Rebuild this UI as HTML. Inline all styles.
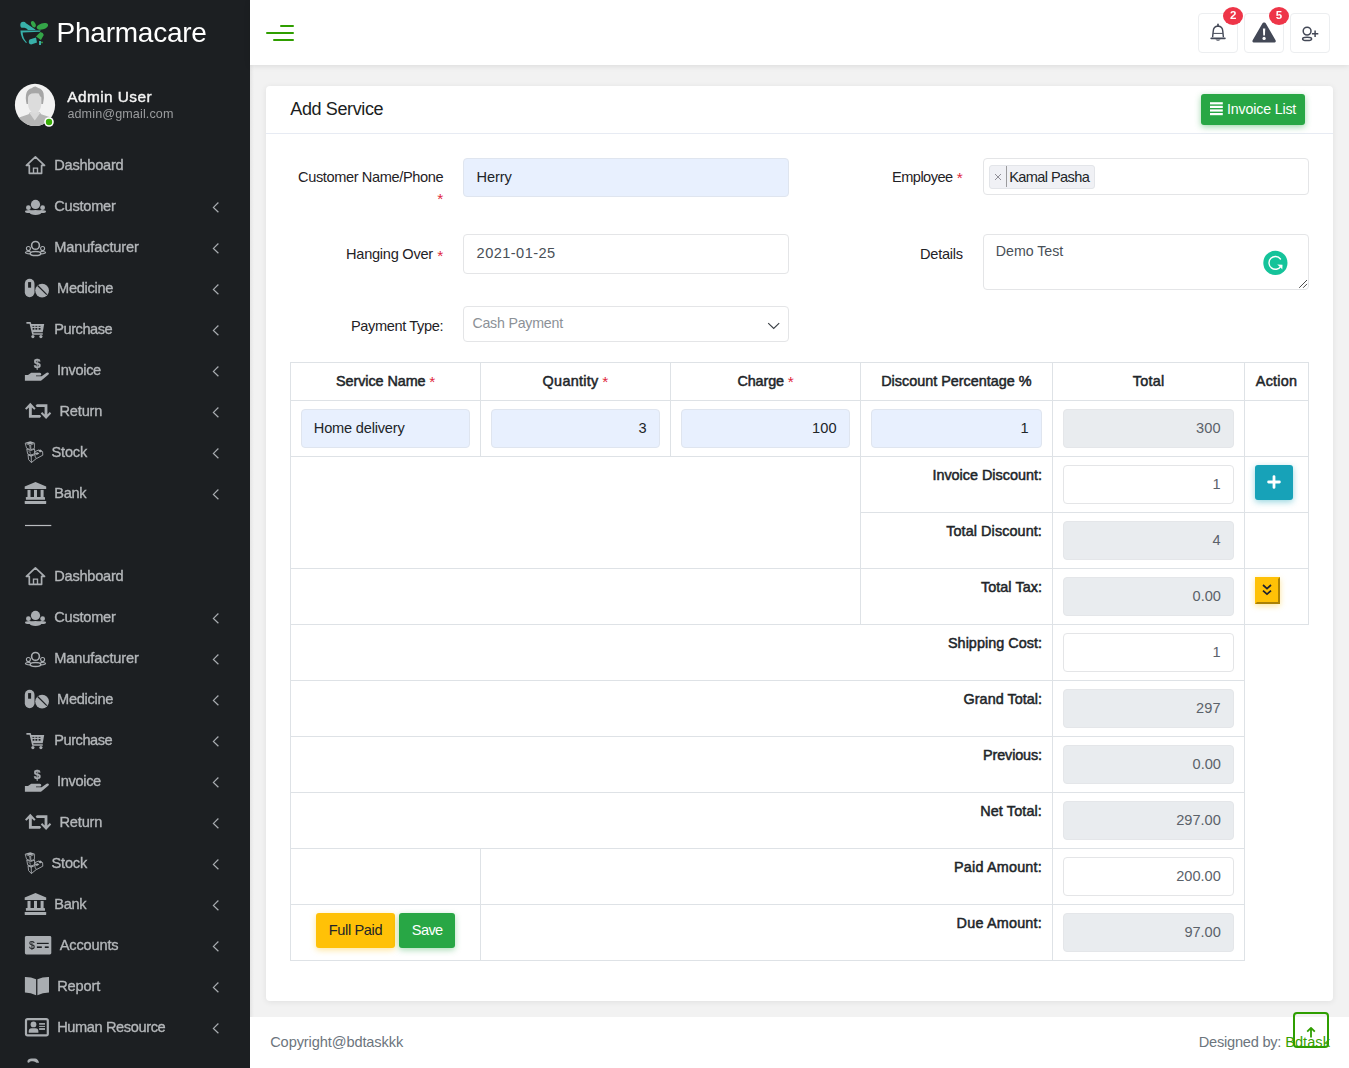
<!DOCTYPE html>
<html><head><meta charset="utf-8"><title>Add Service</title>
<style>
*{box-sizing:border-box;margin:0;padding:0}
html,body{width:1349px;height:1068px;overflow:hidden;background:#f2f2f2;font-family:"Liberation Sans",sans-serif;color:#212529;font-size:14px}
.t{position:absolute;white-space:nowrap;display:block}
svg{position:absolute;overflow:visible}
#sidebar{position:absolute;left:0;top:0;width:250px;height:1068px;background:#1c1f22;overflow:hidden}
#sbshadow{position:absolute;left:250px;top:65px;width:4px;height:1003px;background:linear-gradient(90deg,rgba(0,0,0,.06),rgba(0,0,0,0))}
#topbar{position:absolute;left:250px;top:0;width:1099px;height:65px;background:#fff;box-shadow:0 1px 6px rgba(0,0,0,.10)}
#card{position:absolute;left:266px;top:86px;width:1067px;height:915px;background:#fff;border-radius:4px;box-shadow:0 1px 6px rgba(0,0,0,.08)}
#cardhead{position:absolute;left:266px;top:133px;width:1067px;height:1px;background:#e7ebf3}
#footer{position:absolute;left:250px;top:1017px;width:1099px;height:51px;background:#fff}
.box{position:absolute;border:1px solid #e4e5e7;border-radius:4px;background:#fff}
.ln{position:absolute;background:#dee2e6}
.btn{position:absolute;border-radius:3px}
#sbtxt{position:absolute;left:0;top:0;width:250px;height:1068px;will-change:transform}

</style></head>
<body>
<div id="sidebar"><svg width="250" height="1068" viewBox="0 0 250 1068" style="left:0;top:0"><path d="M35.4 156.8 L26.4 165.4 L29.3 165.4 L29.3 173.3 L41.6 173.3 L41.6 165.4 L44.5 165.4 Z" fill="none" stroke="#a9adb1" stroke-width="1.7" stroke-linejoin="round"/><path d="M33.5 173.3 V168.1 H37.5 V173.3" fill="none" stroke="#a9adb1" stroke-width="1.4"/><circle cx="35.5" cy="204.4" r="4.6" fill="#a9adb1"/><circle cx="28.4" cy="207.7" r="2.4" fill="#a9adb1"/><circle cx="42.6" cy="207.7" r="2.4" fill="#a9adb1"/><ellipse cx="29.4" cy="211.6" rx="4.4" ry="1.5" fill="#a9adb1"/><ellipse cx="41.6" cy="211.6" rx="4.4" ry="1.5" fill="#a9adb1"/><ellipse cx="35.5" cy="212.6" rx="5.9" ry="2.5" fill="#a9adb1"/><path d="M218.4 202.5 L213.4 207.4 L218.4 212.3" fill="none" stroke="#a9adb1" stroke-width="1.2"/><circle cx="35.5" cy="245.4" r="3.9" fill="none" stroke="#a9adb1" stroke-width="1.6"/><circle cx="28.4" cy="248.5" r="2" fill="none" stroke="#a9adb1" stroke-width="1.1"/><circle cx="42.6" cy="248.5" r="2" fill="none" stroke="#a9adb1" stroke-width="1.1"/><path d="M30.6 251.6 Q25.4 251.4 25.4 252.6 Q25.4 253.8 30 253.9 M40.4 251.6 Q45.6 251.4 45.6 252.6 Q45.6 253.8 41 253.9" fill="none" stroke="#a9adb1" stroke-width="1.1"/><ellipse cx="35.5" cy="253.6" rx="5.3" ry="2" fill="none" stroke="#a9adb1" stroke-width="1.5"/><path d="M218.4 243.5 L213.4 248.4 L218.4 253.3" fill="none" stroke="#a9adb1" stroke-width="1.2"/><rect x="24.8" y="278.8" width="9.7" height="18.4" rx="4.85" fill="#a9adb1"/><rect x="28.1" y="282.1" width="3" height="5.6" fill="#1c1f22"/><circle cx="42.1" cy="290.6" r="6.9" fill="#a9adb1"/><path d="M37.6 285.5 L46.8 294.7" stroke="#1c1f22" stroke-width="1.2"/><path d="M218.4 284.5 L213.4 289.4 L218.4 294.3" fill="none" stroke="#a9adb1" stroke-width="1.2"/><path d="M27 322.9 H30.2 L32.9 334 H42.2" fill="none" stroke="#a9adb1" stroke-width="1.6" stroke-linecap="round" stroke-linejoin="round"/><path d="M30.8 324.1 H44.2 L42.7 332.2 H32.6 Z" fill="#a9adb1"/><g fill="#1c1f22"><rect x="32.4" y="325.9" width="1.9" height="0.9"/><rect x="35.4" y="325.9" width="1.9" height="0.9"/><rect x="38.6" y="325.9" width="1.9" height="0.9"/><rect x="32.6" y="328.0" width="1.8" height="1.7"/><rect x="35.4" y="328.0" width="1.9" height="1.7"/><rect x="38.6" y="328.0" width="1.9" height="1.7"/></g><circle cx="32.9" cy="336.6" r="1.6" fill="#a9adb1"/><circle cx="40.9" cy="336.6" r="1.6" fill="#a9adb1"/><path d="M218.4 325.5 L213.4 330.4 L218.4 335.3" fill="none" stroke="#a9adb1" stroke-width="1.2"/><path d="M24.9 375 H28 L31.2 372.8 H39.8 Q41.3 372.9 41.3 374.2 Q41.3 375.4 39.8 375.5 H36 V376.3 H41.6 L46.6 372.7 Q48 372 48.8 373 Q49.2 374 48.2 374.8 L41 380.8 H24.9 Z" fill="#a9adb1"/><path d="M218.4 366.5 L213.4 371.4 L218.4 376.3" fill="none" stroke="#a9adb1" stroke-width="1.2"/><path d="M30.3 402.7 L35.6 408.4 L34.2 409.8 L31.8 407.4 V414.9 H40 L41.2 416.2 L40 417.7 H28.9 V407.4 L26.4 409.8 L25 408.4 Z" fill="#a9adb1"/><path d="M46.1 419.1 L40.8 413.4 L42.2 412 L44.6 414.4 V407.1 H36.9 L35.6 405.7 L36.9 404.3 H47.4 V414.4 L49.8 412 L51.2 413.4 Z" fill="#a9adb1"/><path d="M218.4 407.5 L213.4 412.4 L218.4 417.3" fill="none" stroke="#a9adb1" stroke-width="1.2"/><path d="M25 442.8 L30.3 441.2 L34.8 442.8 L30 444.4 Z" fill="#a9adb1"/><path d="M25.2 443.4 L29.6 445 L30.4 449.7 L26.6 448.2 Z M30.6 445 L34.6 443.4 L34.4 448.4 L31 449.7 Z" fill="none" stroke="#a9adb1" stroke-width="0.8"/><path d="M26.8 449 L30.6 450.6 L34.6 449 L34.6 453.6 L30.8 455.2 L27.6 453.8 Z" fill="none" stroke="#a9adb1" stroke-width="0.9"/><path d="M27.6 450.4 L30.8 451.8 L30.8 454.8 Z" fill="#a9adb1" opacity=".55"/><path d="M28 454.6 L31.2 456.2 L35 454.4 M28 454.6 L28.6 459.6 L31.4 462.6 L31.2 456.2 M31.4 462.6 L36.2 458.6" fill="none" stroke="#a9adb1" stroke-width="0.9"/><path d="M28 455 L31 456.6 L33.6 455.4 L31 454.2 Z" fill="#a9adb1" opacity=".8"/><path d="M35 451.6 L38.6 450 L42.6 451.6 L42.8 455.2 L36.4 458.6 L35 456.2 Z" fill="none" stroke="#a9adb1" stroke-width="0.9"/><path d="M34.8 453.2 L37.6 452.2 L39.4 453.6 L36.8 455 Z M38 450.6 L40.6 449.6 L42.4 451.2 L40 452.4 Z" fill="#a9adb1"/><path d="M218.4 448.5 L213.4 453.4 L218.4 458.3" fill="none" stroke="#a9adb1" stroke-width="1.2"/><path d="M35.5 482.1 L46.2 486.4 V489.1 H24.7 V486.4 Z" fill="#a9adb1"/><rect x="27.5" y="489.9" width="3" height="7.2" fill="#a9adb1"/><rect x="34" y="489.9" width="3" height="7.2" fill="#a9adb1"/><rect x="40.6" y="489.9" width="3" height="7.2" fill="#a9adb1"/><rect x="25.9" y="497" width="19.1" height="2.8" rx="0.4" fill="#a9adb1"/><rect x="24.7" y="501.1" width="21.5" height="2.8" rx="0.4" fill="#a9adb1"/><path d="M218.4 489.5 L213.4 494.4 L218.4 499.3" fill="none" stroke="#a9adb1" stroke-width="1.2"/><path d="M35.4 567.8 L26.4 576.4 L29.3 576.4 L29.3 584.3 L41.6 584.3 L41.6 576.4 L44.5 576.4 Z" fill="none" stroke="#a9adb1" stroke-width="1.7" stroke-linejoin="round"/><path d="M33.5 584.3 V579.1 H37.5 V584.3" fill="none" stroke="#a9adb1" stroke-width="1.4"/><circle cx="35.5" cy="615.4" r="4.6" fill="#a9adb1"/><circle cx="28.4" cy="618.7" r="2.4" fill="#a9adb1"/><circle cx="42.6" cy="618.7" r="2.4" fill="#a9adb1"/><ellipse cx="29.4" cy="622.6" rx="4.4" ry="1.5" fill="#a9adb1"/><ellipse cx="41.6" cy="622.6" rx="4.4" ry="1.5" fill="#a9adb1"/><ellipse cx="35.5" cy="623.6" rx="5.9" ry="2.5" fill="#a9adb1"/><path d="M218.4 613.5 L213.4 618.4 L218.4 623.3" fill="none" stroke="#a9adb1" stroke-width="1.2"/><circle cx="35.5" cy="656.4" r="3.9" fill="none" stroke="#a9adb1" stroke-width="1.6"/><circle cx="28.4" cy="659.5" r="2" fill="none" stroke="#a9adb1" stroke-width="1.1"/><circle cx="42.6" cy="659.5" r="2" fill="none" stroke="#a9adb1" stroke-width="1.1"/><path d="M30.6 662.6 Q25.4 662.4 25.4 663.6 Q25.4 664.8 30 664.9 M40.4 662.6 Q45.6 662.4 45.6 663.6 Q45.6 664.8 41 664.9" fill="none" stroke="#a9adb1" stroke-width="1.1"/><ellipse cx="35.5" cy="664.6" rx="5.3" ry="2" fill="none" stroke="#a9adb1" stroke-width="1.5"/><path d="M218.4 654.5 L213.4 659.4 L218.4 664.3" fill="none" stroke="#a9adb1" stroke-width="1.2"/><rect x="24.8" y="689.8" width="9.7" height="18.4" rx="4.85" fill="#a9adb1"/><rect x="28.1" y="693.1" width="3" height="5.6" fill="#1c1f22"/><circle cx="42.1" cy="701.6" r="6.9" fill="#a9adb1"/><path d="M37.6 696.5 L46.8 705.7" stroke="#1c1f22" stroke-width="1.2"/><path d="M218.4 695.5 L213.4 700.4 L218.4 705.3" fill="none" stroke="#a9adb1" stroke-width="1.2"/><path d="M27 733.9 H30.2 L32.9 745 H42.2" fill="none" stroke="#a9adb1" stroke-width="1.6" stroke-linecap="round" stroke-linejoin="round"/><path d="M30.8 735.1 H44.2 L42.7 743.2 H32.6 Z" fill="#a9adb1"/><g fill="#1c1f22"><rect x="32.4" y="736.9" width="1.9" height="0.9"/><rect x="35.4" y="736.9" width="1.9" height="0.9"/><rect x="38.6" y="736.9" width="1.9" height="0.9"/><rect x="32.6" y="739.0" width="1.8" height="1.7"/><rect x="35.4" y="739.0" width="1.9" height="1.7"/><rect x="38.6" y="739.0" width="1.9" height="1.7"/></g><circle cx="32.9" cy="747.6" r="1.6" fill="#a9adb1"/><circle cx="40.9" cy="747.6" r="1.6" fill="#a9adb1"/><path d="M218.4 736.5 L213.4 741.4 L218.4 746.3" fill="none" stroke="#a9adb1" stroke-width="1.2"/><path d="M24.9 786 H28 L31.2 783.8 H39.8 Q41.3 783.9 41.3 785.2 Q41.3 786.4 39.8 786.5 H36 V787.3 H41.6 L46.6 783.7 Q48 783 48.8 784 Q49.2 785 48.2 785.8 L41 791.8 H24.9 Z" fill="#a9adb1"/><path d="M218.4 777.5 L213.4 782.4 L218.4 787.3" fill="none" stroke="#a9adb1" stroke-width="1.2"/><path d="M30.3 813.7 L35.6 819.4 L34.2 820.8 L31.8 818.4 V825.9 H40 L41.2 827.2 L40 828.7 H28.9 V818.4 L26.4 820.8 L25 819.4 Z" fill="#a9adb1"/><path d="M46.1 830.1 L40.8 824.4 L42.2 823 L44.6 825.4 V818.1 H36.9 L35.6 816.7 L36.9 815.3 H47.4 V825.4 L49.8 823 L51.2 824.4 Z" fill="#a9adb1"/><path d="M218.4 818.5 L213.4 823.4 L218.4 828.3" fill="none" stroke="#a9adb1" stroke-width="1.2"/><path d="M25 853.8 L30.3 852.2 L34.8 853.8 L30 855.4 Z" fill="#a9adb1"/><path d="M25.2 854.4 L29.6 856 L30.4 860.7 L26.6 859.2 Z M30.6 856 L34.6 854.4 L34.4 859.4 L31 860.7 Z" fill="none" stroke="#a9adb1" stroke-width="0.8"/><path d="M26.8 860 L30.6 861.6 L34.6 860 L34.6 864.6 L30.8 866.2 L27.6 864.8 Z" fill="none" stroke="#a9adb1" stroke-width="0.9"/><path d="M27.6 861.4 L30.8 862.8 L30.8 865.8 Z" fill="#a9adb1" opacity=".55"/><path d="M28 865.6 L31.2 867.2 L35 865.4 M28 865.6 L28.6 870.6 L31.4 873.6 L31.2 867.2 M31.4 873.6 L36.2 869.6" fill="none" stroke="#a9adb1" stroke-width="0.9"/><path d="M28 866 L31 867.6 L33.6 866.4 L31 865.2 Z" fill="#a9adb1" opacity=".8"/><path d="M35 862.6 L38.6 861 L42.6 862.6 L42.8 866.2 L36.4 869.6 L35 867.2 Z" fill="none" stroke="#a9adb1" stroke-width="0.9"/><path d="M34.8 864.2 L37.6 863.2 L39.4 864.6 L36.8 866 Z M38 861.6 L40.6 860.6 L42.4 862.2 L40 863.4 Z" fill="#a9adb1"/><path d="M218.4 859.5 L213.4 864.4 L218.4 869.3" fill="none" stroke="#a9adb1" stroke-width="1.2"/><path d="M35.5 893.1 L46.2 897.4 V900.1 H24.7 V897.4 Z" fill="#a9adb1"/><rect x="27.5" y="900.9" width="3" height="7.2" fill="#a9adb1"/><rect x="34" y="900.9" width="3" height="7.2" fill="#a9adb1"/><rect x="40.6" y="900.9" width="3" height="7.2" fill="#a9adb1"/><rect x="25.9" y="908" width="19.1" height="2.8" rx="0.4" fill="#a9adb1"/><rect x="24.7" y="912.1" width="21.5" height="2.8" rx="0.4" fill="#a9adb1"/><path d="M218.4 900.5 L213.4 905.4 L218.4 910.3" fill="none" stroke="#a9adb1" stroke-width="1.2"/><rect x="24.9" y="936" width="26.4" height="18.4" rx="1.4" fill="#a9adb1"/><rect x="36.9" y="942.8" width="11.8" height="1.2" fill="#1c1f22"/><rect x="36.9" y="946.4" width="4.9" height="1.6" fill="#1c1f22"/><rect x="44.8" y="946.4" width="3.9" height="1.6" fill="#1c1f22"/><path d="M218.4 941.5 L213.4 946.4 L218.4 951.3" fill="none" stroke="#a9adb1" stroke-width="1.2"/><path d="M24.9 977.1 Q31 977 36.1 979.2 V995.2 Q31 993 24.9 992.6 Z" fill="#a9adb1"/><path d="M49 977.1 Q42.6 977 37.4 979.2 V995.2 Q42.6 993 49 992.6 Z" fill="#a9adb1"/><path d="M218.4 982.5 L213.4 987.4 L218.4 992.3" fill="none" stroke="#a9adb1" stroke-width="1.2"/><rect x="26" y="1019.1" width="21.8" height="16.2" rx="1.6" fill="none" stroke="#a9adb1" stroke-width="2.2"/><circle cx="33.5" cy="1024.4" r="2.9" fill="#a9adb1"/><path d="M28.7 1032.7 V1031.4 Q28.7 1028.2 31.6 1028.2 H35.5 Q38.4 1028.2 38.4 1031.4 V1032.7 Z" fill="#a9adb1"/><rect x="39.1" y="1023.1" width="5.9" height="1.6" fill="#a9adb1"/><rect x="39.1" y="1025.9" width="5.9" height="1" fill="#a9adb1"/><rect x="39.1" y="1028.1" width="5.9" height="1.8" fill="#a9adb1"/><path d="M218.4 1023.5 L213.4 1028.4 L218.4 1033.3" fill="none" stroke="#a9adb1" stroke-width="1.2"/><rect x="25" y="524.9" width="26.3" height="1.2" fill="#b9bcbf"/><path d="M27.4 1061.2 Q28 1058.4 31.5 1058.4 H35 Q38 1058.6 39.1 1062.8 H36.5 Q35 1061.4 33 1061.2 H31 Q29.6 1061.4 29 1062.8 Q27.2 1062.8 27.4 1061.2 Z" fill="#a9adb1"/><g><path d="M20.3 25.2 Q20.2 22 23.2 21.8 Q25.2 21.8 26 23.2 L35.4 29.4 Q35.8 30 35 30.1 L28 30 Q26.6 28.2 24.4 27.8 L21.6 27.8 Q20.4 27.2 20.3 25.2 Z" fill="#38b0a9"/><ellipse cx="33.4" cy="24.3" rx="2" ry="3.4" transform="rotate(-28 33.4 24.3)" fill="#34a548"/><ellipse cx="42.4" cy="26.4" rx="5.9" ry="3.1" transform="rotate(-17 42.4 26.4)" fill="#34a548"/><path d="M20.4 30.6 H40.8 L39.8 31.8 L22.6 32.4 Q23 38.6 26.9 42.4 L26 43 Q20.8 38.6 20.4 30.6 Z" fill="#38b0a9"/><path d="M40.4 32 Q43.4 32.4 43.8 35 L40.9 40 L36 36.5 Z" fill="#34a548"/><path d="M29.6 39.6 L36 37.4 L37 42.6 L31.2 44.4 Q29.2 44.4 28.8 42.4 Q28.6 40.6 29.6 39.6 Z" fill="#38b0a9"/><rect x="39" y="41" width="2" height="4" fill="#38a9a2"/><circle cx="42" cy="42.4" r="0.9" fill="#34a548"/></g><defs><clipPath id="avc"><ellipse cx="35" cy="104.9" rx="20.1" ry="21.1"/></clipPath></defs><g clip-path="url(#avc)"><rect x="14" y="83" width="42" height="44" fill="#f2f2f2"/><path d="M16 127 L18.5 118.6 Q19.4 117 22 116.4 L28.6 114.2 L30.2 112 H39.6 L41.2 114.2 L48 116.4 Q50.6 117 51.5 118.6 L54 127 Z" fill="#b5b5b5"/><path d="M29.4 113 L34.8 120.6 L40.2 113 L38.4 111.4 H31.2 Z" fill="#d9d9d9"/><path d="M26.6 104 Q25 97.4 26.6 92.6 Q28 88.8 31.6 88.2 Q33.4 86.8 35.4 86.6 Q37 87.6 38.4 88 Q42.6 89.4 43.6 93.4 Q44.6 98 43 104 Z" fill="#a6a6a6"/><path d="M28 98 Q28.4 94.6 31.6 93.6 Q35 92.8 38.8 93.4 Q39.4 95.6 41.4 97.4 V103.4 Q41.2 110 36.4 113.2 Q34.8 114 33 113.2 Q28.2 110 28 103.4 Z" fill="#dcdcdc"/></g><circle cx="49" cy="122" r="4.8" fill="#fff"/><circle cx="49" cy="122" r="3.2" fill="#3aae08"/></svg><div id="sbtxt"><span class="t" style="left:54.30px;top:158.24px;font-size:14.6px;line-height:14.6px;color:#b4b7ba;letter-spacing:-0.258px;-webkit-text-stroke:0.35px #b4b7ba;">Dashboard</span><span class="t" style="left:54.30px;top:199.24px;font-size:14.6px;line-height:14.6px;color:#b4b7ba;letter-spacing:-0.248px;-webkit-text-stroke:0.35px #b4b7ba;">Customer</span><span class="t" style="left:54.30px;top:240.24px;font-size:14.6px;line-height:14.6px;color:#b4b7ba;letter-spacing:-0.126px;-webkit-text-stroke:0.35px #b4b7ba;">Manufacturer</span><span class="t" style="left:57.10px;top:281.24px;font-size:14.6px;line-height:14.6px;color:#b4b7ba;letter-spacing:-0.291px;-webkit-text-stroke:0.35px #b4b7ba;">Medicine</span><span class="t" style="left:54.30px;top:322.24px;font-size:14.6px;line-height:14.6px;color:#b4b7ba;letter-spacing:-0.472px;-webkit-text-stroke:0.35px #b4b7ba;">Purchase</span><span class="t" style="left:33.70px;top:358.30px;font-size:12.4px;line-height:12.4px;color:#a9adb1;letter-spacing:0.000px;font-weight:bold;-webkit-text-stroke:0.3px #a9adb1;">$</span><span class="t" style="left:57.10px;top:363.24px;font-size:14.6px;line-height:14.6px;color:#b4b7ba;letter-spacing:-0.351px;-webkit-text-stroke:0.35px #b4b7ba;">Invoice</span><span class="t" style="left:59.50px;top:404.24px;font-size:14.6px;line-height:14.6px;color:#b4b7ba;letter-spacing:-0.187px;-webkit-text-stroke:0.35px #b4b7ba;">Return</span><span class="t" style="left:51.50px;top:445.24px;font-size:14.6px;line-height:14.6px;color:#b4b7ba;letter-spacing:-0.203px;-webkit-text-stroke:0.35px #b4b7ba;">Stock</span><span class="t" style="left:54.30px;top:486.24px;font-size:14.6px;line-height:14.6px;color:#b4b7ba;letter-spacing:-0.344px;-webkit-text-stroke:0.35px #b4b7ba;">Bank</span><span class="t" style="left:54.30px;top:569.24px;font-size:14.6px;line-height:14.6px;color:#b4b7ba;letter-spacing:-0.258px;-webkit-text-stroke:0.35px #b4b7ba;">Dashboard</span><span class="t" style="left:54.30px;top:610.24px;font-size:14.6px;line-height:14.6px;color:#b4b7ba;letter-spacing:-0.248px;-webkit-text-stroke:0.35px #b4b7ba;">Customer</span><span class="t" style="left:54.30px;top:651.24px;font-size:14.6px;line-height:14.6px;color:#b4b7ba;letter-spacing:-0.126px;-webkit-text-stroke:0.35px #b4b7ba;">Manufacturer</span><span class="t" style="left:57.10px;top:692.24px;font-size:14.6px;line-height:14.6px;color:#b4b7ba;letter-spacing:-0.291px;-webkit-text-stroke:0.35px #b4b7ba;">Medicine</span><span class="t" style="left:54.30px;top:733.24px;font-size:14.6px;line-height:14.6px;color:#b4b7ba;letter-spacing:-0.472px;-webkit-text-stroke:0.35px #b4b7ba;">Purchase</span><span class="t" style="left:33.70px;top:769.30px;font-size:12.4px;line-height:12.4px;color:#a9adb1;letter-spacing:0.000px;font-weight:bold;-webkit-text-stroke:0.3px #a9adb1;">$</span><span class="t" style="left:57.10px;top:774.24px;font-size:14.6px;line-height:14.6px;color:#b4b7ba;letter-spacing:-0.351px;-webkit-text-stroke:0.35px #b4b7ba;">Invoice</span><span class="t" style="left:59.50px;top:815.24px;font-size:14.6px;line-height:14.6px;color:#b4b7ba;letter-spacing:-0.187px;-webkit-text-stroke:0.35px #b4b7ba;">Return</span><span class="t" style="left:51.50px;top:856.24px;font-size:14.6px;line-height:14.6px;color:#b4b7ba;letter-spacing:-0.203px;-webkit-text-stroke:0.35px #b4b7ba;">Stock</span><span class="t" style="left:54.30px;top:897.24px;font-size:14.6px;line-height:14.6px;color:#b4b7ba;letter-spacing:-0.344px;-webkit-text-stroke:0.35px #b4b7ba;">Bank</span><span class="t" style="left:28.90px;top:940.60px;font-size:10.4px;line-height:10.4px;color:#1c1f22;letter-spacing:0.000px;-webkit-text-stroke:0.15px #1c1f22;">$</span><span class="t" style="left:59.80px;top:938.24px;font-size:14.6px;line-height:14.6px;color:#b4b7ba;letter-spacing:-0.169px;-webkit-text-stroke:0.35px #b4b7ba;">Accounts</span><span class="t" style="left:57.20px;top:979.24px;font-size:14.6px;line-height:14.6px;color:#b4b7ba;letter-spacing:-0.120px;-webkit-text-stroke:0.35px #b4b7ba;">Report</span><span class="t" style="left:57.20px;top:1020.24px;font-size:14.6px;line-height:14.6px;color:#b4b7ba;letter-spacing:-0.386px;-webkit-text-stroke:0.35px #b4b7ba;">Human Resource</span><span class="t" style="left:56.60px;top:19.20px;font-size:28px;line-height:28px;color:#ffffff;letter-spacing:-0.251px;">Pharmacare</span><span class="t" style="left:67.30px;top:89.06px;font-size:15.4px;line-height:15.4px;color:#f4f4f4;letter-spacing:0.426px;-webkit-text-stroke:0.4px #f4f4f4;">Admin User</span><span class="t" style="left:67.40px;top:108.33px;font-size:12.6px;line-height:12.6px;color:#9a9c9e;letter-spacing:0.112px;">admin@gmail.com</span></div></div><div id="sbshadow"></div>
<div id="topbar"></div><div class="ln" style="left:280px;top:25px;width:14px;height:2px;background:#2f9e00;border-radius:1px"></div><div class="ln" style="left:266px;top:32px;width:28px;height:2px;background:#2f9e00;border-radius:1px"></div><div class="ln" style="left:273px;top:39px;width:21px;height:2px;background:#2f9e00;border-radius:1px"></div><div class="box" style="left:1198px;top:13px;width:40px;height:40px;border-color:#eceef0"></div><div class="box" style="left:1244px;top:13px;width:40px;height:40px;border-color:#eceef0"></div><div class="box" style="left:1290px;top:13px;width:40px;height:40px;border-color:#eceef0"></div><svg width="1349" height="70" viewBox="0 0 1349 70" style="left:0;top:0"><path d="M1218 26 Q1222.6 26.4 1222.8 31.4 L1223.4 37.2 M1218 26 Q1213.4 26.4 1213.2 31.4 L1212.6 37.2" fill="none" stroke="#434856" stroke-width="1.4"/><path d="M1211.2 38.3 H1224.9" stroke="#434856" stroke-width="1.7" stroke-linecap="round"/><path d="M1213.2 33.4 H1222.8" stroke="#434856" stroke-width="1"/><path d="M1218 24.3 V26" stroke="#434856" stroke-width="1.6" stroke-linecap="round"/><path d="M1215.4 39.4 Q1218 42.2 1220.6 39.4 Z" fill="#434856"/><path d="M1264.1 22.6 Q1265 22.2 1265.7 23.3 L1275.7 40.4 Q1276.2 42.2 1274.6 42.6 H1253.6 Q1252 42.2 1252.5 40.4 L1262.5 23.3 Q1263.2 22.2 1264.1 22.6 Z" fill="#434856"/><path d="M1262.9 28.4 H1265.3 L1264.9 35.4 H1263.3 Z" fill="#fff"/><circle cx="1264.1" cy="38.4" r="1.6" fill="#fff"/><circle cx="1307.1" cy="31.1" r="3.9" fill="none" stroke="#434856" stroke-width="1.5"/><ellipse cx="1307.1" cy="38.9" rx="4.5" ry="1.6" fill="none" stroke="#434856" stroke-width="1.5"/><path d="M1311.9 33.7 H1318.3 M1315.1 30.5 V36.9" stroke="#434856" stroke-width="1.5" fill="none"/><ellipse cx="1233" cy="16" rx="10" ry="9" fill="#ee3548"/><ellipse cx="1279" cy="16" rx="10" ry="9" fill="#ee3548"/></svg><span class="t" style="left:1229.90px;top:10.47px;font-size:11.5px;line-height:11.5px;color:#fff;letter-spacing:0.000px;font-weight:bold;">2</span><span class="t" style="left:1275.80px;top:10.47px;font-size:11.5px;line-height:11.5px;color:#fff;letter-spacing:0.000px;font-weight:bold;">5</span><div id="card"></div><div id="cardhead"></div><span class="t" style="left:290.30px;top:99.96px;font-size:18px;line-height:18px;color:#1b1e21;letter-spacing:-0.377px;">Add Service</span><div class="btn" style="left:1201px;top:94px;width:104px;height:31px;background:#28a745;box-shadow:0 2px 6px rgba(40,167,69,.45)"></div><svg width="16" height="16" viewBox="0 0 16 16" style="left:1209px;top:101px"><g fill="#fff"><rect x="1" y="1.2" width="12.8" height="2.2"/><rect x="1" y="4.8" width="12.8" height="2.2"/><rect x="1" y="8.4" width="12.8" height="2.2"/><rect x="1" y="12" width="12.8" height="2.2"/></g></svg><span class="t" style="left:1227.00px;top:102.38px;font-size:14.2px;line-height:14.2px;color:#fff;letter-spacing:-0.153px;">Invoice List</span><div id="footer"></div><span class="t" style="left:270.20px;top:1035.44px;font-size:14.6px;line-height:14.6px;color:#6c757d;letter-spacing:-0.107px;">Copyright@bdtaskkk</span><span class="t" style="left:1198.80px;top:1035.44px;font-size:14.6px;line-height:14.6px;color:#6c757d;letter-spacing:-0.235px;">Designed by:</span><span class="t" style="left:1285.20px;top:1035.44px;font-size:14.6px;line-height:14.6px;color:#37a000;letter-spacing:0.028px;">Bdtask</span><div class="box" style="left:1293px;top:1012px;width:36px;height:36px;border:2px solid #2f9e00;border-radius:4px;background:transparent"></div><svg width="12" height="14" viewBox="0 0 12 14" style="left:1304.8px;top:1026px"><path d="M6 2 V11.6 M2.2 5.6 L6 1.9 L9.8 5.6" fill="none" stroke="#2f9e00" stroke-width="1.8" stroke-linejoin="round"/></svg>
<div class="box" style="left:463px;top:158px;width:326px;height:39px;background:#e8f0fe;border-color:#dfe5ef"></div><span class="t" style="left:476.60px;top:170.24px;font-size:14.6px;line-height:14.6px;color:#212529;letter-spacing:-0.138px;">Herry</span><span class="t" style="left:298.00px;top:170.04px;font-size:14.6px;line-height:14.6px;color:#1f2226;letter-spacing:-0.387px;">Customer Name/Phone</span><span class="t" style="left:437.28px;top:191.17px;font-size:15.5px;line-height:15.5px;color:#e0283c;letter-spacing:0.000px;">*</span><div class="box" style="left:463px;top:234px;width:326px;height:39.5px"></div><span class="t" style="left:476.60px;top:246.24px;font-size:14.6px;line-height:14.6px;color:#495057;letter-spacing:0.432px;">2021-01-25</span><span class="t" style="left:346.00px;top:247.04px;font-size:14.6px;line-height:14.6px;color:#1f2226;letter-spacing:-0.257px;">Hanging Over</span><span class="t" style="left:437.18px;top:247.57px;font-size:15.5px;line-height:15.5px;color:#e0283c;letter-spacing:0.000px;">*</span><div class="box" style="left:463px;top:306px;width:326px;height:36px"></div><span class="t" style="left:472.40px;top:316.38px;font-size:14.2px;line-height:14.2px;color:#8c9197;letter-spacing:-0.211px;">Cash Payment</span><span class="t" style="left:351.00px;top:319.04px;font-size:14.6px;line-height:14.6px;color:#1f2226;letter-spacing:-0.378px;">Payment Type:</span><svg width="14" height="10" viewBox="0 0 14 10" style="left:766px;top:321px"><path d="M2.2 2.2 L7.7 7.5 L13.2 2.2" fill="none" stroke="#3a3f45" stroke-width="1.15"/></svg><div class="box" style="left:983px;top:158px;width:326px;height:36.5px"></div><div class="box" style="left:989px;top:165px;width:106px;height:23.5px;background:#f0f1f5;border-color:#e3e5e9;border-radius:3px"></div><div class="ln" style="left:1006px;top:166px;width:1px;height:21px;background:#9b9b9d"></div><svg width="10" height="10" viewBox="0 0 10 10" style="left:993px;top:171.9px"><path d="M2 2 L8 8 M8 2 L2 8" stroke="#85838c" stroke-width="0.9" fill="none"/></svg><span class="t" style="left:1009.20px;top:170.04px;font-size:14.6px;line-height:14.6px;color:#212529;letter-spacing:-0.622px;">Kamal Pasha</span><span class="t" style="left:892.00px;top:170.24px;font-size:14.6px;line-height:14.6px;color:#1f2226;letter-spacing:-0.540px;">Employee</span><span class="t" style="left:956.68px;top:170.07px;font-size:15.5px;line-height:15.5px;color:#e0283c;letter-spacing:0.000px;">*</span><div class="box" style="left:983px;top:234px;width:326px;height:55.5px"></div><span class="t" style="left:995.80px;top:244.38px;font-size:14.2px;line-height:14.2px;color:#495057;letter-spacing:-0.023px;">Demo Test</span><span class="t" style="left:920.00px;top:247.04px;font-size:14.6px;line-height:14.6px;color:#1f2226;letter-spacing:-0.261px;">Details</span><svg width="26" height="26" viewBox="0 0 26 26" style="left:1262.2px;top:250px"><circle cx="13.4" cy="12.9" r="12.1" fill="#15c39a"/><path d="M18.44 8.96 A6.4 6.4 0 1 0 18.83 16.29" fill="none" stroke="#fff" stroke-width="1.4" stroke-linecap="round"/><path d="M15.2 14.4 L20.5 14.7 L20.3 19.6 L18.6 17.4 Z" fill="#fff"/></svg><svg width="10" height="10" viewBox="0 0 10 10" style="left:1298px;top:279px"><path d="M1.2 8.8 L9 1 M5.1 8.8 L9 4.9" stroke="#4a4a4a" stroke-width="1" fill="none"/></svg>
<div class="ln" style="left:290px;top:362px;width:1019px;height:1px"></div><div class="ln" style="left:290px;top:400px;width:1019px;height:1px"></div><div class="ln" style="left:290px;top:456px;width:1019px;height:1px"></div><div class="ln" style="left:290px;top:568px;width:1019px;height:1px"></div><div class="ln" style="left:290px;top:624px;width:1019px;height:1px"></div><div class="ln" style="left:860px;top:512px;width:449px;height:1px"></div><div class="ln" style="left:290px;top:680px;width:955px;height:1px"></div><div class="ln" style="left:290px;top:736px;width:955px;height:1px"></div><div class="ln" style="left:290px;top:792px;width:955px;height:1px"></div><div class="ln" style="left:290px;top:848px;width:955px;height:1px"></div><div class="ln" style="left:290px;top:904px;width:955px;height:1px"></div><div class="ln" style="left:290px;top:960px;width:955px;height:1px"></div><div class="ln" style="left:290px;top:362px;width:1px;height:599px"></div><div class="ln" style="left:1052px;top:362px;width:1px;height:599px"></div><div class="ln" style="left:1244px;top:362px;width:1px;height:599px"></div><div class="ln" style="left:480px;top:362px;width:1px;height:95px"></div><div class="ln" style="left:670px;top:362px;width:1px;height:95px"></div><div class="ln" style="left:860px;top:362px;width:1px;height:263px"></div><div class="ln" style="left:1308px;top:362px;width:1px;height:263px"></div><div class="ln" style="left:480px;top:848px;width:1px;height:113px"></div><span class="t" style="left:336.00px;top:374.01px;font-size:14.4px;line-height:14.4px;color:#212529;letter-spacing:-0.069px;-webkit-text-stroke:0.5px #212529;">Service Name</span><span class="t" style="left:429.28px;top:374.07px;font-size:15.5px;line-height:15.5px;color:#e0283c;letter-spacing:0.000px;">*</span><span class="t" style="left:542.60px;top:374.01px;font-size:14.4px;line-height:14.4px;color:#212529;letter-spacing:0.297px;-webkit-text-stroke:0.5px #212529;">Quantity</span><span class="t" style="left:602.28px;top:374.07px;font-size:15.5px;line-height:15.5px;color:#e0283c;letter-spacing:0.000px;">*</span><span class="t" style="left:737.40px;top:374.01px;font-size:14.4px;line-height:14.4px;color:#212529;letter-spacing:-0.105px;-webkit-text-stroke:0.5px #212529;">Charge</span><span class="t" style="left:787.68px;top:374.07px;font-size:15.5px;line-height:15.5px;color:#e0283c;letter-spacing:0.000px;">*</span><span class="t" style="left:881.20px;top:374.01px;font-size:14.4px;line-height:14.4px;color:#212529;letter-spacing:-0.004px;-webkit-text-stroke:0.5px #212529;">Discount Percentage %</span><span class="t" style="left:1132.80px;top:374.01px;font-size:14.4px;line-height:14.4px;color:#212529;letter-spacing:0.237px;-webkit-text-stroke:0.5px #212529;">Total</span><span class="t" style="left:1255.80px;top:374.01px;font-size:14.4px;line-height:14.4px;color:#212529;letter-spacing:0.230px;-webkit-text-stroke:0.5px #212529;">Action</span><div class="box" style="left:301px;top:409px;width:169px;height:38.5px;background:#e8f0fe;border-color:#dfe5ef"></div><span class="t" style="left:313.80px;top:420.84px;font-size:14.6px;line-height:14.6px;color:#212529;letter-spacing:-0.193px;">Home delivery</span><div class="box" style="left:491px;top:409px;width:169px;height:38.5px;background:#e8f0fe;border-color:#dfe5ef"></div><span class="t" style="left:638.60px;top:420.84px;font-size:14.6px;line-height:14.6px;color:#212529;letter-spacing:-0.120px;">3</span><div class="box" style="left:681px;top:409px;width:169px;height:38.5px;background:#e8f0fe;border-color:#dfe5ef"></div><span class="t" style="left:812.00px;top:420.84px;font-size:14.6px;line-height:14.6px;color:#212529;letter-spacing:0.080px;">100</span><div class="box" style="left:871px;top:409px;width:171px;height:38.5px;background:#e8f0fe;border-color:#dfe5ef"></div><span class="t" style="left:1020.40px;top:420.84px;font-size:14.6px;line-height:14.6px;color:#212529;letter-spacing:-0.120px;">1</span><div class="box" style="left:1063px;top:409px;width:171px;height:38.5px;background:#e9ecef;border-color:#e4e6e9"></div><span class="t" style="left:1196.00px;top:420.84px;font-size:14.6px;line-height:14.6px;color:#5b626a;letter-spacing:0.147px;">300</span><div class="box" style="left:1063px;top:465px;width:171px;height:38.5px;background:#fff;border-color:#e4e5e7"></div><span class="t" style="left:1212.60px;top:476.84px;font-size:14.6px;line-height:14.6px;color:#5b626a;letter-spacing:-0.120px;">1</span><span class="t" style="left:932.40px;top:468.01px;font-size:14.4px;line-height:14.4px;color:#212529;letter-spacing:-0.003px;-webkit-text-stroke:0.5px #212529;">Invoice Discount:</span><div class="box" style="left:1063px;top:521px;width:171px;height:38.5px;background:#e9ecef;border-color:#e4e6e9"></div><span class="t" style="left:1212.60px;top:532.84px;font-size:14.6px;line-height:14.6px;color:#5b626a;letter-spacing:-0.120px;">4</span><span class="t" style="left:946.20px;top:524.01px;font-size:14.4px;line-height:14.4px;color:#212529;letter-spacing:0.090px;-webkit-text-stroke:0.5px #212529;">Total Discount:</span><div class="box" style="left:1063px;top:577px;width:171px;height:38.5px;background:#e9ecef;border-color:#e4e6e9"></div><span class="t" style="left:1192.60px;top:588.84px;font-size:14.6px;line-height:14.6px;color:#5b626a;letter-spacing:-0.054px;">0.00</span><span class="t" style="left:981.00px;top:580.01px;font-size:14.4px;line-height:14.4px;color:#212529;letter-spacing:0.043px;-webkit-text-stroke:0.5px #212529;">Total Tax:</span><div class="box" style="left:1063px;top:633px;width:171px;height:38.5px;background:#fff;border-color:#e4e5e7"></div><span class="t" style="left:1212.60px;top:644.84px;font-size:14.6px;line-height:14.6px;color:#5b626a;letter-spacing:-0.120px;">1</span><span class="t" style="left:948.00px;top:636.01px;font-size:14.4px;line-height:14.4px;color:#212529;letter-spacing:0.025px;-webkit-text-stroke:0.5px #212529;">Shipping Cost:</span><div class="box" style="left:1063px;top:689px;width:171px;height:38.5px;background:#e9ecef;border-color:#e4e6e9"></div><span class="t" style="left:1196.00px;top:700.84px;font-size:14.6px;line-height:14.6px;color:#5b626a;letter-spacing:0.147px;">297</span><span class="t" style="left:963.60px;top:692.01px;font-size:14.4px;line-height:14.4px;color:#212529;letter-spacing:0.018px;-webkit-text-stroke:0.5px #212529;">Grand Total:</span><div class="box" style="left:1063px;top:745px;width:171px;height:38.5px;background:#e9ecef;border-color:#e4e6e9"></div><span class="t" style="left:1192.60px;top:756.84px;font-size:14.6px;line-height:14.6px;color:#5b626a;letter-spacing:-0.054px;">0.00</span><span class="t" style="left:983.00px;top:748.01px;font-size:14.4px;line-height:14.4px;color:#212529;letter-spacing:-0.114px;-webkit-text-stroke:0.5px #212529;">Previous:</span><div class="box" style="left:1063px;top:801px;width:171px;height:38.5px;background:#e9ecef;border-color:#e4e6e9"></div><span class="t" style="left:1176.20px;top:812.84px;font-size:14.6px;line-height:14.6px;color:#5b626a;letter-spacing:-0.009px;">297.00</span><span class="t" style="left:980.20px;top:804.01px;font-size:14.4px;line-height:14.4px;color:#212529;letter-spacing:0.123px;-webkit-text-stroke:0.5px #212529;">Net Total:</span><div class="box" style="left:1063px;top:857px;width:171px;height:38.5px;background:#fff;border-color:#e4e5e7"></div><span class="t" style="left:1176.20px;top:868.84px;font-size:14.6px;line-height:14.6px;color:#5b626a;letter-spacing:-0.009px;">200.00</span><span class="t" style="left:954.00px;top:860.01px;font-size:14.4px;line-height:14.4px;color:#212529;letter-spacing:0.195px;-webkit-text-stroke:0.5px #212529;">Paid Amount:</span><div class="box" style="left:1063px;top:913px;width:171px;height:38.5px;background:#e9ecef;border-color:#e4e6e9"></div><span class="t" style="left:1184.40px;top:924.84px;font-size:14.6px;line-height:14.6px;color:#5b626a;letter-spacing:-0.027px;">97.00</span><span class="t" style="left:956.60px;top:916.01px;font-size:14.4px;line-height:14.4px;color:#212529;letter-spacing:0.195px;-webkit-text-stroke:0.5px #212529;">Due Amount:</span><div class="btn" style="left:1255px;top:465px;width:38px;height:35px;background:#17a2b8;box-shadow:0 2px 6px rgba(23,162,184,.45)"></div><svg width="16" height="16" viewBox="0 0 16 16" style="left:1266.3px;top:474px"><path d="M2.6 8 H13.4 M8 2.6 V13.4" stroke="#fff" stroke-width="2.8" stroke-linecap="round" fill="none"/></svg><div class="btn" style="left:1255px;top:577px;width:25px;height:27px;background:#ffc107;border-radius:0;border:2px outset #ffc107;box-shadow:0 2px 6px rgba(255,193,7,.4)"></div><svg width="12" height="14" viewBox="0 0 12 14" style="left:1261.3px;top:583px"><path d="M2 2 L6 5.6 L10 2 M2 7.6 L6 11.2 L10 7.6" fill="none" stroke="#1d2030" stroke-width="1.7"/></svg><div class="btn" style="left:316px;top:913px;width:79px;height:35px;background:#ffc107;box-shadow:0 2px 6px rgba(255,193,7,.4)"></div><span class="t" style="left:328.80px;top:923.04px;font-size:14.6px;line-height:14.6px;color:#212529;letter-spacing:-0.378px;">Full Paid</span><div class="btn" style="left:399px;top:913px;width:56px;height:35px;background:#28a745;box-shadow:0 2px 6px rgba(40,167,69,.4)"></div><span class="t" style="left:411.80px;top:923.04px;font-size:14.6px;line-height:14.6px;color:#fff;letter-spacing:-0.619px;">Save</span>
</body></html>
